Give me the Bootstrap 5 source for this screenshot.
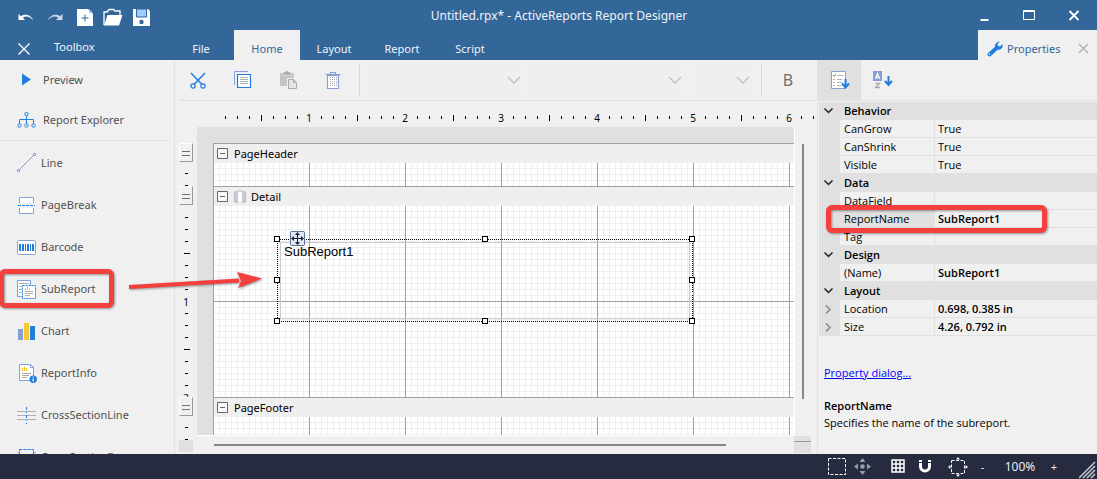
<!DOCTYPE html>
<html lang="en">
<head>
<meta charset="utf-8">
<meta name="viewport" content="width=device-width, initial-scale=1">
<title>Untitled.rpx* - ActiveReports Report Designer</title>
<link rel="stylesheet" href="https://cdn.jsdelivr.net/npm/bootstrap@5.3.0/dist/css/bootstrap.min.css">
<style>
:root{--blue:#336699;--face:#f0f0f0;--edge:#e0e0e0}
body{font-family:"Noto Sans","Open Sans",sans-serif;font-size:11px;line-height:18px;background:var(--face);color:#000}
svg{display:block;flex:none}
button{font:inherit;color:inherit;background:none;border:0;padding:0}
.app{height:100vh;min-height:479px;overflow:hidden}
.topbar{background:var(--blue);color:#f0f4f8}
.row-30{height:30px}
.quick{width:156px;padding-left:12px}
.quick button{width:30px;height:30px;padding-top:3px}
.quick .q-end{margin-left:2px}
.win button{width:45px;height:30px}
.app-title{font-size:12px;padding-top:2px}
.tb-head{width:168px;padding-left:18px}
.tb-head button{padding-top:8px}
.ribbon-tab{color:#f0f4f8;min-width:68px;padding:5px 16px 0;height:30px;line-height:28px}
.ribbon-tab.narrow{min-width:66px}
.ribbon-tab.current,.prop-tab{background:var(--face);color:var(--blue)}
.prop-tab{width:119px;padding:7px 8px 0 9px}
.toolbox{width:175px;border-right:1px solid var(--edge);color:#505050}
.tool{height:42px;padding-left:16px;gap:4px;width:100%}
.tool-top{height:40px;gap:6px}
.tool svg{width:21px}
.rule{border-top:1px solid var(--edge);margin:0 4px 1px 0}
.toolbar-strip{height:41px;border-bottom:1px solid var(--edge);margin:0 3px 0 4px}
.tbtn{width:45px;height:40px}
.t-first{width:37px}
.t-bold{width:52px;height:40px;font-size:16px;color:#707070}
.vsep{width:1px;height:32px;background:#d8d8d8}
.combos{padding-left:8px}
.combo{height:34px;border:0;border-radius:0;background-color:#efefef!important;padding:0;font-size:12px;background-size:14px 9px;background-position:right 4px center;
background-image:url("data:image/svg+xml,%3Csvg xmlns='http://www.w3.org/2000/svg' viewBox='0 0 14 9'%3E%3Cpath d='M1 1l6 6 6-6' fill='none' stroke='%23c0c0c0' stroke-width='1.3'/%3E%3C/svg%3E")}
.combo-lg{width:157px;margin-right:4px}.combo-sm{width:64px}
.hruler{height:26px;padding-left:44px;font-size:10px}
.inch{width:96px;height:26px;flex:none;line-height:14px;
background:linear-gradient(#000,#000) 42px 14px/1px 6px no-repeat,linear-gradient(90deg,transparent 6px,#000 6px 7px,transparent 7px) 0 15px/12px 3px repeat-x}
.inch span{width:12px;height:14px;margin-top:10px;background:var(--face);text-align:center}
.vruler{width:18px;margin-left:4px;padding-bottom:2px;font-size:10px}
.vinch{width:14px;height:96px;flex:none;line-height:14px;
background:linear-gradient(#000,#000) 5px 42px/6px 1px no-repeat,linear-gradient(transparent 6px,#000 6px 7px,transparent 7px) 6px 0/3px 12px repeat-y}
.vinch span{width:14px;height:12px;background:var(--face);text-align:center}
.grip{width:14px;height:19px;flex:none;border:1px solid #fff;border-right-color:#999;border-bottom-color:#999;padding:7px 2px 0}
.grip::before{content:"";display:block;height:5px;border:solid #707070;border-width:1px 0}
.vticks{overflow:hidden;flex:none}
.v-hf{height:24px;padding-top:5px}
.v-detail{flex:1 1 0;min-height:0;padding-top:6px}
.corner{width:14px;height:12px;background:var(--edge);flex:none}
.canvas{background:var(--edge);padding:16px 0 0 16px;border:solid #fff;border-width:0 1px 1px 0}
.page-sheet{border-left:1px solid #9f9f9f}
.band-head{height:20px;border-top:1px solid #9f9f9f;background:#efefef;padding-left:3px;gap:5px;line-height:16px;flex:none}
.sheet-grid{background:
repeating-linear-gradient(90deg,transparent 0 95px,#9f9f9f 95px 96px),
repeating-linear-gradient(transparent 0 95px,#9f9f9f 95px 96px),
repeating-linear-gradient(90deg,transparent 0 5px,#efefef 5px 6px),
repeating-linear-gradient(transparent 0 5px,#efefef 5px 6px),#fff}
.g-head{height:23px;flex:none}.g-foot{height:18px;flex:none}
.subreport{left:63px;top:33px;width:416px;height:83px;font:13px/16px "Liberation Sans",Arial,sans-serif;padding:5px 7px}
.sel-frame{left:-3px;top:-3px}
.move-handle{left:13px;top:-8px}
.vscroll{width:22px;padding:17px 0 0 7px}
.vscroll-thumb{width:2px;height:255px;background:#868686}
.vscroll-end{width:17px;height:17px;background:linear-gradient(#999,#999) 0 5px/17px 1px no-repeat var(--edge)}
.hscroll{height:18px}
.hscroll-track{padding:8px 68px 0 17px}
.hscroll-track div{height:2px;background:#868686}
.end-cell{width:23px}
.props{width:280px;border-left:1px solid var(--edge);font-family:"Open Sans","Noto Sans",sans-serif}
.ptools{height:41px;border-bottom:1px solid var(--edge)}
.ptools button{width:43px;height:40px}
.ptools .on{background:var(--edge)}
.pgrid{width:278px;margin:1px 0 0 1px;table-layout:fixed;border-collapse:separate;border-spacing:0}
.pgrid td,.pgrid th{height:18px;line-height:16px;padding:1px 3px 0 4px;border-bottom:1px solid var(--edge);font-weight:400;white-space:nowrap}
.pgrid td:last-child{padding-left:3px}
.pgrid th{border-right:1px solid var(--edge)}
.c-gut{width:21px}.c-name{width:95px}
.pgrid .gut{background:var(--edge);padding-left:5px}
.pgrid .cat th,.pgrid .cat td{background:var(--edge);font-weight:600}
.pgrid .set,.w600{font-weight:600}
.pgrid .sel th{background:var(--edge)}
.pinfo{padding-left:6px;line-height:17px}
.plink{color:#00f}
.mark-box{border:5px solid #f43f3f;border-radius:6px;filter:drop-shadow(1px 1px 1px #0006);pointer-events:none}
.mark-tool{left:-1px;top:209px;width:115px;height:39px}
.mark-prop{left:8px;top:103px;width:221px;height:28px}
.pointer{left:127px;top:211px;pointer-events:none;filter:drop-shadow(1px 1px 1px #0006)}
.status{height:25px;background:#262b40;color:#e8eaf0}
.status button{height:25px}
.z-out{width:29px}.z-val{width:46px;font-size:12px}.z-in{width:22px;margin-right:14px}
</style>
</head>
<body>
<div class="app d-flex flex-column">
<header class="topbar">
 <div class="row-30 d-flex align-items-center">
  <div class="quick d-flex">
   <button aria-label="Undo" class="d-flex align-items-center justify-content-center"><svg width="16" height="16"><path d="M.5 5v6H7L4.800 8.800C8 6.500 12 7.500 15.200 11.500 13 5.500 7 4.500 3 7.200z" fill="#fff"/></svg></button>
   <button aria-label="Redo" class="d-flex align-items-center justify-content-center"><svg width="16" height="16"><path d="M15.500 5v6H9l2.200-2.200C8 6.500 4 7.500.8 11.500 3 5.500 9 4.500 13 7.200z" fill="#c9d6e4"/></svg></button>
   <button aria-label="New" class="q-end d-flex align-items-center justify-content-center"><svg width="16" height="18"><path d="M0 1h11l5 5v12H0z" fill="#fff"/><path d="M12 1l4 4h-4z" fill="#99ccff"/><path d="M8 6.500v7M4.500 10h7" stroke="#336699"/></svg></button>
   <button aria-label="Open" class="d-flex align-items-center justify-content-center"><svg width="20" height="18"><path d="M1 17V4h3l2-2.500h4.500L12 3h5v4" fill="none" stroke="#fff" stroke-width="1.300"/><path d="M1 17.500L4.500 7H19.500L16 17.500z" fill="#fff"/></svg></button>
   <button aria-label="Save" class="d-flex align-items-center justify-content-center"><svg width="17" height="18"><path d="M0 1h15l2 2v15H0z" fill="#fff"/><path d="M3.500 1h10v8h-10z" fill="#99ccff" stroke="#336699"/><circle cx="8.500" cy="14" r="2.200" fill="#336699"/></svg></button>
  </div>
  <div class="flex-grow-1 text-center app-title">Untitled.rpx* - ActiveReports Report Designer</div>
  <div class="win d-flex">
   <button aria-label="Minimize" class="d-flex align-items-center justify-content-center"><svg width="12" height="14"><path d="M1.500 12h8" stroke="#fff" stroke-width="2"/></svg></button>
   <button aria-label="Maximize" class="d-flex align-items-center justify-content-center"><svg width="14" height="11"><path d="M.5.500h11v9H.5zM.5 1.500h11" fill="none" stroke="#fff"/></svg></button>
   <button aria-label="Close" class="d-flex align-items-center justify-content-center"><svg width="14" height="12"><path d="M1.500 2l9 9m0-9l-9 9" stroke="#fff" stroke-width="1.800"/></svg></button>
  </div>
 </div>
 <div class="row-30 d-flex">
  <div class="tb-head d-flex align-items-center">
   <button aria-label="Close toolbox"><svg width="12" height="12"><path d="M.5.500l11 11m0-11l-11 11" stroke="#fff" stroke-width="1.300"/></svg></button>
   <span class="ms-4 pt-1">Toolbox</span>
  </div>
  <nav class="d-flex text-center flex-grow-1">
   <button class="ribbon-tab narrow">File</button><button class="ribbon-tab narrow current">Home</button><button class="ribbon-tab">Layout</button><button class="ribbon-tab">Report</button><button class="ribbon-tab">Script</button>
  </nav>
  <div class="prop-tab d-flex align-items-center">
   <svg width="16" height="16"><path d="M2.500 13.500L9 7.500" stroke="#1f7ee0" stroke-width="4" stroke-linecap="round"/><path d="M13 .5L10.500 3l.5 2 2 .5L15.500 3C16.500 7 13.500 9.500 10 8.500 6.500 7 7 1 13 .5z" fill="#1f7ee0"/><circle cx="2.500" cy="13.300" r=".8" fill="#f0f0f0"/></svg>
   <span class="flex-grow-1 ps-1">Properties</span>
   <button aria-label="Close properties"><svg width="11" height="11"><path d="M1 1l9 9m0-9l-9 9" stroke="#b0b0b0" stroke-width="1.300"/></svg></button>
  </div>
 </div>
</header>

<main class="d-flex flex-grow-1 position-relative overflow-hidden">
 <aside class="toolbox flex-shrink-0 overflow-hidden">
  <button class="tool tool-top d-flex align-items-center"><svg height="16"><path d="M6 1.500l9 6-9 6z" fill="#1f7ee0"/></svg>Preview</button>
  <button class="tool tool-top d-flex align-items-center"><svg height="18"><path d="M10.500 5v8M3.500 13V8.500h14V13" fill="none" stroke="#1f7ee0"/><g fill="#f0f0f0" stroke="#1f7ee0"><circle cx="10.500" cy="3" r="1.700"/><circle cx="3.500" cy="14.500" r="1.700"/><circle cx="10.500" cy="14.500" r="1.700"/><circle cx="17.500" cy="14.500" r="1.700"/></g></svg>Report Explorer</button>
  <div class="rule"></div>
  <button class="tool d-flex align-items-center"><svg height="20"><path d="M3 17L18 2" stroke="#86a0d3"/><path d="M1.500 16.500h2v2h-2zM17.500.500h2v2h-2z" fill="#fff" stroke="#86a0d3"/></svg>Line</button>
  <button class="tool d-flex align-items-center"><svg height="18"><path d="M3.500 7V1.500h14V7M3.500 12v5.500h14V12" fill="#fff" stroke="#86a0d3"/><path d="M2 9.500h17" stroke="#1f7ee0" stroke-dasharray="3 1"/></svg>PageBreak</button>
  <button class="tool d-flex align-items-center"><svg height="16"><rect x="1.500" y="1.500" width="18" height="14" rx="1" fill="#fff" stroke="#86a0d3"/><path d="M3 5h2v7H3zM6 5h2v7H6zM9 5h1v7H9zM11 5h2v7h-2zM14 5h1v7h-1zM16 5h2v7h-2z" fill="#1f7ee0"/></svg>Barcode</button>
  <button class="tool d-flex align-items-center"><svg height="20"><path d="M1.500 1.500h13v16h-13z" fill="#fff" stroke="#86a0d3"/><path d="M3 4.500h10M3 7.500h3M3 10.500h3M3 13.500h3" stroke="#b0b0b0"/><path d="M6.500 6.500h13v13h-13z" fill="#fff" stroke="#1f7ee0" stroke-dasharray="2 1"/><path d="M9.500 11V9M11.500 11V8M13.500 11V9.500" stroke="#f2c230"/><path d="M9 12.500h8M9 14.500h8M9 16.500h5" stroke="#b0b0b0"/></svg>SubReport</button>
  <button class="tool d-flex align-items-center"><svg height="18"><path d="M2 7h5v11H2z" fill="#86a0d3"/><path d="M8 1h5v17H8z" fill="#f5c836"/><path d="M14 4h5v14h-5z" fill="#1f7ee0"/></svg>Chart</button>
  <button class="tool d-flex align-items-center"><svg height="20"><path d="M3.500 1.500h11l3 3v13h-14z" fill="#fff" stroke="#86a0d3"/><path d="M14.500 1.500v3h3" fill="none" stroke="#86a0d3"/><path d="M6.500 8V5M8.500 8V3.500M10.500 8V5" stroke="#f2c230" stroke-width="1.200"/><path d="M6 10.500h9M6 12.500h7M6 14.500h5" stroke="#a8a8a8"/><circle cx="17.200" cy="16.200" r="3.700" fill="#1f7ee0"/><path d="M17.200 15.500v3M17.200 13.500v1" stroke="#fff" stroke-width="1.200"/></svg>ReportInfo</button>
  <button class="tool d-flex align-items-center"><svg height="18"><path d="M1 5.500h19M1 9.500h19M1 13.500h19" stroke="#b0b0b0"/><path d="M10.500 1v17" stroke="#1f7ee0" stroke-dasharray="3 2 1 2"/></svg>CrossSectionLine</button>
  <button class="tool d-flex align-items-center"><svg height="18"><path d="M1 4.500h19M1 8.500h19M1 12.500h19" stroke="#b0b0b0"/><path d="M3.500 1.500h14v13h-14z" fill="#f0f0f0" stroke="#1f7ee0" stroke-dasharray="3 1"/></svg>CrossSectionBox</button>
 </aside>

 <section class="flex-grow-1 d-flex flex-column overflow-hidden">
  <div class="toolbar-strip d-flex align-items-center flex-shrink-0">
   <button class="tbtn t-first d-flex align-items-center justify-content-center" aria-label="Cut"><svg width="16" height="17"><path d="M1 1l11 11.500M15 1L4 12.500" stroke="#1f7ee0" stroke-width="1.500"/><circle cx="3" cy="14" r="2.100" fill="none" stroke="#1f7ee0" stroke-width="1.200"/><circle cx="13" cy="14" r="2.100" fill="none" stroke="#1f7ee0" stroke-width="1.200"/></svg></button>
   <button class="tbtn ms-1 d-flex align-items-center justify-content-center" aria-label="Copy"><svg width="18" height="18"><path d="M.5 14V.5H14" fill="none" stroke="#86a0d3"/><path d="M3.500 3.500h13v13h-13z" fill="#fff" stroke="#1f7ee0" stroke-width="1.200"/><path d="M6 6.500h8M6 8.500h8M6 10.500h8M6 12.500h8" stroke="#b0b0b0"/></svg></button>
   <button class="tbtn d-flex align-items-center justify-content-center" aria-label="Paste"><svg width="18" height="20"><path d="M1 3h14v13H1z" fill="#c4c4c4"/><path d="M4 2h2.500a1.500 1.500 0 013 0H12v3H4z" fill="#a8a8a8" stroke="#f0f0f0" stroke-width=".6"/><path d="M9.500 9.500h5l3 3v7h-8z" fill="#f0f0f0" stroke="#f0f0f0" stroke-width="3"/><path d="M9.500 9.500h5l3 3v6h-8zM14.500 9.500v3h3" fill="#e4e4e4" stroke="#a8a8a8"/></svg></button>
   <button class="tbtn d-flex align-items-center justify-content-center" aria-label="Delete"><svg width="16" height="18"><path d="M2.500 4.500h11v13h-11z" fill="#fff" stroke="#86a0d3" stroke-width="1.200"/><path d="M.5 3.500h15M5.500 3V1.500h5V3" fill="none" stroke="#86a0d3" stroke-width="1.200"/><path d="M5.500 6v10M7.500 6v10M9.500 6v10M11.500 6v10" stroke="#aaa" stroke-dasharray="1 1"/></svg></button>
   <span class="vsep flex-shrink-0 ms-1"></span>
   <div class="combos d-flex flex-shrink-0">
    <select class="form-select combo combo-lg" aria-label="Font" disabled><option></option></select>
    <select class="form-select combo combo-lg" aria-label="Style" disabled><option></option></select>
    <select class="form-select combo combo-sm" aria-label="Size" disabled><option></option></select>
   </div>
   <span class="vsep flex-shrink-0 ms-auto"></span>
   <button class="t-bold flex-shrink-0" aria-label="Bold">B</button>
  </div>
  <div class="hruler d-flex overflow-hidden flex-shrink-0">
   <div class="inch d-flex justify-content-end"><span>1</span></div><div class="inch d-flex justify-content-end"><span>2</span></div><div class="inch d-flex justify-content-end"><span>3</span></div><div class="inch d-flex justify-content-end"><span>4</span></div><div class="inch d-flex justify-content-end"><span>5</span></div><div class="inch d-flex justify-content-end"><span>6</span></div>
   <div class="inch flex-shrink-1"></div>
  </div>
  <div class="d-flex flex-grow-1 overflow-hidden">
   <div class="vruler d-flex flex-column pt-3 flex-shrink-0">
    <div class="grip"></div>
    <div class="vticks v-hf"><div class="vinch"></div></div>
    <div class="grip"></div>
    <div class="vticks v-detail"><div class="vinch d-flex align-items-end"><span>1</span></div><div class="vinch d-flex align-items-end"><span>2</span></div><div class="vinch"></div></div>
    <div class="grip"></div>
    <div class="vticks v-hf"><div class="vinch"></div></div>
    <div class="corner"></div>
   </div>
   <div class="flex-grow-1 d-flex flex-column overflow-hidden">
    <div class="d-flex flex-grow-1 overflow-hidden">
     <div class="canvas flex-grow-1 d-flex flex-column overflow-hidden">
      <div class="page-sheet d-flex flex-column flex-grow-1">
       <div class="band-head d-flex align-items-center"><svg width="12" height="12"><path d="M.5.500h10v10H.5zM3 5.500h5" fill="#f8f8f8" stroke="#666"/></svg><span>PageHeader</span></div>
       <div class="sheet-grid g-head"></div>
       <div class="band-head d-flex align-items-center"><svg width="12" height="12"><path d="M.5.500h10v10H.5zM3 5.500h5" fill="#f8f8f8" stroke="#666"/></svg><svg width="12" height="14"><path d="M2.500 2v10M9.500 2v10" stroke="#c8ccd4" stroke-width="3"/><path d="M4 2h4v10H4z" fill="#fff"/><path d="M.5 2q5.500-2.500 11 0M.5 12q2 1.500 4 0m3 0q2 1.500 4 0M.5 2v10M11.500 2v10" fill="none" stroke="#b8bcc6"/></svg><span>Detail</span></div>
       <div class="sheet-grid flex-grow-1 position-relative">
        <div class="subreport position-absolute">
         <svg class="position-absolute sel-frame" width="422" height="90" fill="none" shape-rendering="crispEdges"><path d="M6.500 6.500h409v76h-409z" stroke="#ccc"/><path d="M3.500 3.500h415v82h-415z" stroke="#000" stroke-dasharray="1 1"/><g fill="#fff" stroke="#000"><path d="M.5.500h5v5h-5zM208.500.500h5v5h-5zM415.500.500h5v5h-5zM.5 41.500h5v5h-5zM415.500 41.500h5v5h-5zM.5 82.500h5v5h-5zM208.500 82.500h5v5h-5zM415.500 82.500h5v5h-5z"/></g></svg>
         <svg class="position-absolute move-handle" width="15" height="15"><rect x=".5" y=".5" width="14" height="14" rx="1" fill="#dfe7f7" stroke="#5f7096"/><path d="M7.500 2v11M2 7.500h11" stroke="#223"/><path d="M7.500 1L10 4H5zM7.500 14L10 11H5zM1 7.500L4 5v5zM14 7.500L11 5v5z" fill="#223"/></svg>
         SubReport1
        </div>
       </div>
       <div class="band-head d-flex align-items-center"><svg width="12" height="12"><path d="M.5.500h10v10H.5zM3 5.500h5" fill="#f8f8f8" stroke="#666"/></svg><span>PageFooter</span></div>
       <div class="sheet-grid g-foot"></div>
      </div>
     </div>
     <div class="vscroll flex-shrink-0"><div class="vscroll-thumb"></div></div>
    </div>
    <div class="hscroll d-flex flex-shrink-0"><div class="hscroll-track flex-grow-1"><div></div></div><div class="end-cell"><div class="vscroll-end"></div></div></div>
   </div>
  </div>
 </section>

 <aside class="props flex-shrink-0">
  <div class="ptools d-flex">
   <button class="on d-flex align-items-center justify-content-center" aria-label="Categorized"><svg width="20" height="20"><path d="M1.500 1.500h14v17h-14z" fill="#fff" stroke="#86a0d3"/><path d="M7 5.500h6M7 9.500h5M7 12.500h5M7 15.500h4M3 9.500h2M3 12.500h2M3 15.500h2" stroke="#b0b0b0"/><path d="M3 5l1 1.500L6 4" fill="none" stroke="#888"/><path d="M15.500 9v8M12 13.500l3.500 4 3.500-4" fill="none" stroke="#1f7ee0" stroke-width="2"/></svg></button>
   <button class="d-flex align-items-center justify-content-center" aria-label="Alphabetical"><svg width="20" height="18"><rect width="9" height="10" fill="#86a0d3"/><path d="M2.500 8L4.500 2.500 6.500 8M3.300 6.300h2.500" fill="none" stroke="#fff" stroke-width="1.200"/><path d="M2.500 12.500h4l-4 4h4.500" fill="none" stroke="#a8a8a8" stroke-width="1.300"/><path d="M15.500 5v9M12 10l3.500 4 3.500-4" fill="none" stroke="#1f7ee0" stroke-width="2"/></svg></button>
  </div>
  <div class="position-relative">
   <table class="pgrid">
    <colgroup><col class="c-gut"><col class="c-name"><col></colgroup>
    <tr class="cat"><td class="gut"><svg width="9" height="6"><path d="M.5.500l4 4 4-4" fill="none" stroke="#222" stroke-width="1.500"/></svg></td><th scope="rowgroup">Behavior</th><td></td></tr>
    <tr><td class="gut"></td><th scope="row">CanGrow</th><td>True</td></tr>
    <tr><td class="gut"></td><th scope="row">CanShrink</th><td>True</td></tr>
    <tr><td class="gut"></td><th scope="row">Visible</th><td>True</td></tr>
    <tr class="cat"><td class="gut"><svg width="9" height="6"><path d="M.5.500l4 4 4-4" fill="none" stroke="#222" stroke-width="1.500"/></svg></td><th scope="rowgroup">Data</th><td></td></tr>
    <tr><td class="gut"></td><th scope="row">DataField</th><td></td></tr>
    <tr class="sel"><td class="gut"></td><th scope="row">ReportName</th><td class="set">SubReport1</td></tr>
    <tr><td class="gut"></td><th scope="row">Tag</th><td></td></tr>
    <tr class="cat"><td class="gut"><svg width="9" height="6"><path d="M.5.500l4 4 4-4" fill="none" stroke="#222" stroke-width="1.500"/></svg></td><th scope="rowgroup">Design</th><td></td></tr>
    <tr><td class="gut"></td><th scope="row">(Name)</th><td class="set">SubReport1</td></tr>
    <tr class="cat"><td class="gut"><svg width="9" height="6"><path d="M.5.500l4 4 4-4" fill="none" stroke="#222" stroke-width="1.500"/></svg></td><th scope="rowgroup">Layout</th><td></td></tr>
    <tr><td class="gut"><svg width="9" height="9"><path d="M2 .5l4 4-4 4" fill="none" stroke="#888" stroke-width="1.500"/></svg></td><th scope="row">Location</th><td class="set">0.698, 0.385 in</td></tr>
    <tr><td class="gut"><svg width="9" height="9"><path d="M2 .5l4 4-4 4" fill="none" stroke="#888" stroke-width="1.500"/></svg></td><th scope="row">Size</th><td class="set">4.26, 0.792 in</td></tr>
   </table>
   <div class="mark-box mark-prop position-absolute"></div>
  </div>
  <div class="pinfo pt-4 mt-1"><a href="#" class="plink">Property dialog...</a></div>
  <div class="pinfo pt-3 w600">ReportName</div>
  <div class="pinfo">Specifies the name of the subreport.</div>
 </aside>

 <div class="position-absolute mark-box mark-tool"></div>
 <svg class="position-absolute pointer" width="140" height="24"><path d="M2 16L112 9.500" stroke="#f43f3f" stroke-width="4"/><path d="M110 1L135 7.500 111 17l3-7z" fill="#f43f3f"/></svg>
</main>

<footer class="status d-flex align-items-center justify-content-end flex-shrink-0">
 <button aria-label="Select" class="me-2"><svg width="18" height="18"><path d="M.5.500h17v16H.5z" fill="none" stroke="#fff" stroke-dasharray="3 1.500"/></svg></button>
 <button aria-label="Pan" class="me-3"><svg width="17" height="18"><path d="M8.500 0l3 4h-6zM8.500 17l3-4h-6zM0 8.500l4-3v6zM17 8.500l-4-3v6z" fill="#9a9ca6"/><circle cx="8.500" cy="8.500" r="2.300" fill="#9a9ca6"/></svg></button>
 <button aria-label="Grid" class="ms-1 me-2"><svg width="15" height="15"><path d="M1 1h12v12H1zM5 1v12M9 1v12M1 5h12M1 9h12" fill="none" stroke="#fff" stroke-width="1.500"/></svg></button>
 <button aria-label="Snap" class="ms-1 me-3"><svg width="14" height="15"><path d="M2.500 4v3.500a4.500 4.500 0 009 0V4" fill="none" stroke="#fff" stroke-width="3"/><path d="M1 1h3v2H1zM10 1h3v2h-3z" fill="#fff"/></svg></button>
 <button aria-label="Fit"><svg width="20" height="20"><path d="M3.500 3.500h13v13h-13z" fill="none" stroke="#fff" stroke-dasharray="3 1.500"/><path d="M10 0l2 2.500H8zM10 20l2-2.500H8zM0 10l2.500-2v4zM20 10l-2.500-2v4z" fill="#fff"/></svg></button>
 <button class="z-out" aria-label="Zoom out">-</button>
 <span class="text-center z-val">100%</span>
 <button class="z-in" aria-label="Zoom in">+</button>
 <svg class="align-self-end" width="18" height="18"><path d="M0 17L16 1M4 17L16 5M8 17l8-8M12 17l4-4" stroke="#c8cad2" stroke-width="1.500"/></svg>
</footer>
</div>
<script src="https://cdn.jsdelivr.net/npm/bootstrap@5.3.0/dist/js/bootstrap.bundle.min.js"></script>
</body>
</html>
